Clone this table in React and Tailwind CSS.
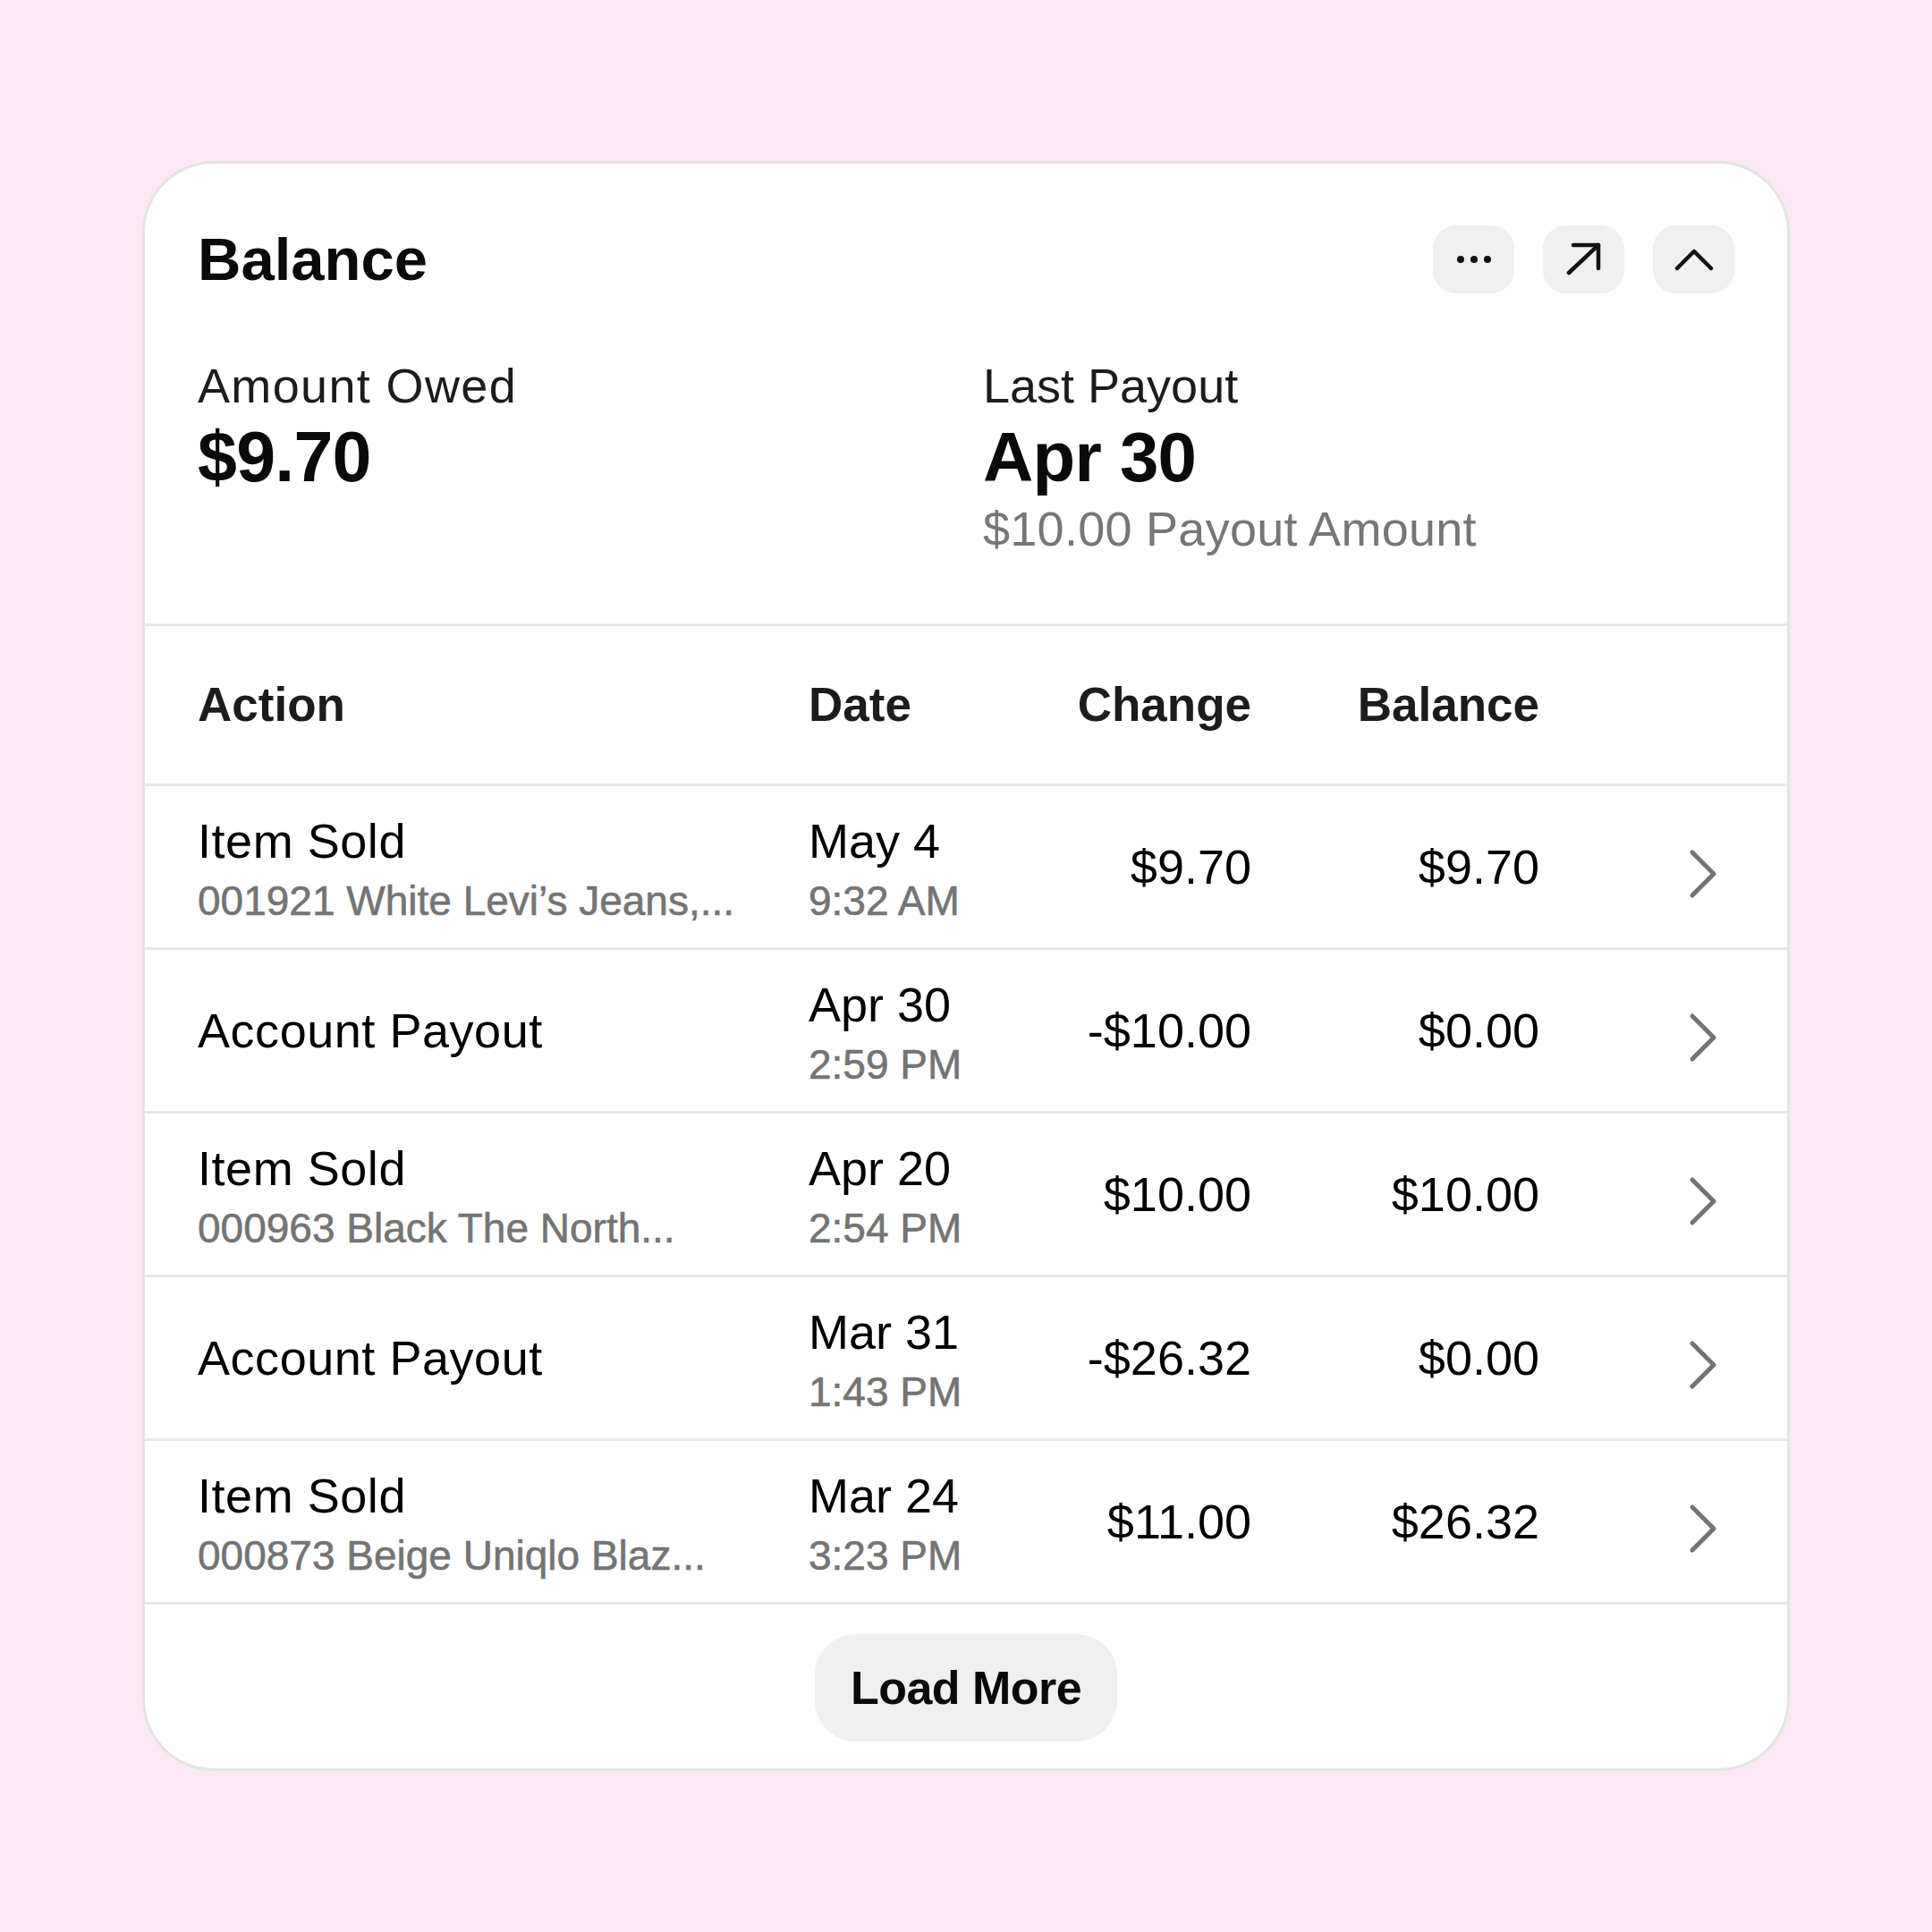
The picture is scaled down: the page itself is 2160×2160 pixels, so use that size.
import React from 'react';

const rows = [
  { action: 'Item Sold', detail: '001921 White Levi’s Jeans,...', date: 'May 4', time: '9:32 AM', change: '$9.70', balance: '$9.70' },
  { action: 'Account Payout', date: 'Apr 30', time: '2:59 PM', change: '-$10.00', balance: '$0.00' },
  { action: 'Item Sold', detail: '000963 Black The North...', date: 'Apr 20', time: '2:54 PM', change: '$10.00', balance: '$10.00' },
  { action: 'Account Payout', date: 'Mar 31', time: '1:43 PM', change: '-$26.32', balance: '$0.00' },
  { action: 'Item Sold', detail: '000873 Beige Uniqlo Blaz...', date: 'Mar 24', time: '3:23 PM', change: '$11.00', balance: '$26.32' },
];

const cols = 'grid grid-cols-[683px_225px_270px_322px_1fr] items-center';

const IconButton = ({ children }) => (
  <button className="w-[91px] h-[76px] rounded-[26px] bg-[#f0f0f0] flex items-center justify-center">
    {children}
  </button>
);

const App = () => {
  return (
    <div className="w-[2160px] h-[2160px] bg-[#fce8f4] flex items-center justify-center font-['Liberation_Sans',Arial,sans-serif]">
      <div className="w-[1842px] h-[1800px] bg-white border-[3px] border-[#e4e4e4] rounded-[80px] overflow-hidden flex flex-col">
        {/* Header */}
        <div className="pt-[69px] px-[59px] flex items-center justify-between h-[145px]">
          <h1 className="text-[67px] leading-[76px] font-bold text-[#0a0a0a]">Balance</h1>
          <div className="flex gap-[32px]">
            <IconButton>
              <svg width="40" height="10" viewBox="0 0 40 10">
                <circle cx="5" cy="5" r="4" fill="#111" />
                <circle cx="20" cy="5" r="4" fill="#111" />
                <circle cx="35" cy="5" r="4" fill="#111" />
              </svg>
            </IconButton>
            <IconButton>
              <svg width="40" height="38" viewBox="0 0 40 38" fill="none" stroke="#111" strokeWidth="4.5" strokeLinecap="round" strokeLinejoin="round">
                <path d="M3 34 L36 3" />
                <path d="M8 3 H36 V29" />
              </svg>
            </IconButton>
            <IconButton>
              <svg width="44" height="26" viewBox="0 0 44 26" fill="none" stroke="#111" strokeWidth="4.5" strokeLinecap="round" strokeLinejoin="round">
                <path d="M3 23 L22 4 L41 23" />
              </svg>
            </IconButton>
          </div>
        </div>

        {/* Summary */}
        <div className="pt-[71px] pb-[74px] px-[59px] grid grid-cols-[878px_1fr] border-b-[3px] border-[#e8e8e8]">
          <div>
            <p className="text-[54px] leading-[64px] text-[#1c1c1c] tracking-[0.025em]">Amount Owed</p>
            <p className="text-[79px] leading-[96px] font-bold text-[#0a0a0a] tracking-[-0.01em]">$9.70</p>
          </div>
          <div>
            <p className="text-[54px] leading-[64px] text-[#1c1c1c]">Last Payout</p>
            <p className="text-[78px] leading-[96px] font-bold text-[#0a0a0a] tracking-[-0.01em]">Apr 30</p>
            <p className="text-[54px] leading-[64px] text-[#767676] tracking-[0.005em]">$10.00 Payout Amount</p>
          </div>
        </div>

        {/* Table header */}
        <div className={`${cols} h-[179px] px-[59px] border-b-[3px] border-[#e8e8e8] text-[53px] font-bold text-[#1c1c1c]`}>
          <span>Action</span>
          <span>Date</span>
          <span className="text-right">Change</span>
          <span className="text-right">Balance</span>
          <span />
        </div>

        {/* Rows */}
        {rows.map((row, i) => (
          <div key={i} className={`${cols} h-[183px] px-[59px] border-b-[3px] border-[#e8e8e8] text-black`}>
            <div>
              <p className="text-[54px] leading-[76px] tracking-[0.01em]">{row.action}</p>
              {row.detail && (
                <p className="text-[46px] leading-[58px] text-[#747474] [-webkit-text-stroke:0.6px_#747474]">{row.detail}</p>
              )}
            </div>
            <div>
              <p className="text-[54px] leading-[76px]">{row.date}</p>
              <p className="text-[46px] leading-[58px] text-[#747474] [-webkit-text-stroke:0.6px_#747474]">{row.time}</p>
            </div>
            <span className="text-[54px] text-right">{row.change}</span>
            <span className="text-[54px] text-right">{row.balance}</span>
            <div className="flex justify-end pr-[18px] mt-[16px]">
              <svg width="34" height="56" viewBox="0 0 34 56" fill="none" stroke="#737373" strokeWidth="5" strokeLinecap="round" strokeLinejoin="round">
                <path d="M5 4 L29 28 L5 52" />
              </svg>
            </div>
          </div>
        ))}

        {/* Load more */}
        <div className="flex justify-center pt-[33px]">
          <button className="h-[120px] px-[40px] rounded-[46px] bg-[#f0f0f0] text-[52px] font-bold text-[#0a0a0a] tracking-[-0.01em]">
            Load More
          </button>
        </div>
      </div>
    </div>
  );
};

export default App;
